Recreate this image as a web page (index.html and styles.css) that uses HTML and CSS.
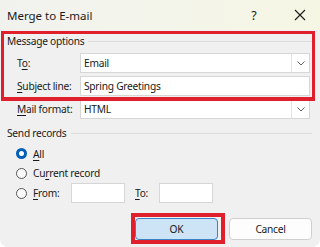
FILE: index.html
```html
<!DOCTYPE html>
<html>
<head>
<meta charset="utf-8">
<link rel="stylesheet" href="styles.css">
</head>
<body>
<div class="win">
  <div class="titlebar">
    <span class="title">Merge to E-mail</span>
    <span class="help">?</span>
    <span class="close">
      <svg width="12" height="12" viewBox="0 0 12 12"><path d="M1 1L11 11M11 1L1 11" stroke="#1a1a1a" stroke-width="1.1" fill="none"/></svg>
    </span>
  </div>
  <div class="body">
    <div class="group-head msg"><span>Message options</span><span class="rule"></span></div>
    <div class="row r-to">
      <span class="lbl">T<u>o</u>:</span>
      <div class="field combo"><span class="val">Email</span><span class="drop"><svg width="8" height="5" viewBox="0 0 8 5"><path d="M0.5 0.5L4 4L7.5 0.5" stroke="#606060" stroke-width="1" fill="none"/></svg></span></div>
    </div>
    <div class="row r-subj">
      <span class="lbl"><u>S</u>ubject line:</span>
      <div class="field"><span class="val">Spring Greetings</span></div>
    </div>
    <div class="row r-fmt">
      <span class="lbl"><u>M</u>ail format:</span>
      <div class="field combo"><span class="val">HTML</span><span class="drop"><svg width="8" height="5" viewBox="0 0 8 5"><path d="M0.5 0.5L4 4L7.5 0.5" stroke="#606060" stroke-width="1" fill="none"/></svg></span></div>
    </div>
    <div class="group-head send"><span>Send records</span><span class="rule"></span></div>
    <div class="radio-row r1"><span class="radio on"></span><span><u>A</u>ll</span></div>
    <div class="radio-row r2"><span class="radio"></span><span>Cu<u>r</u>rent record</span></div>
    <div class="radio-row r3">
      <span class="radio"></span><span class="from-lbl"><u>F</u>rom:</span>
      <div class="small-input"></div>
      <span class="to-lbl"><u>T</u>o:</span>
      <div class="small-input"></div>
    </div>
    <div class="buttons">
      <div class="btn ok">OK</div>
      <div class="btn cancel">Cancel</div>
    </div>
  </div>
  <div class="mark mark-msg"></div>
  <div class="mark mark-ok"></div>
</div>
</body>
</html>
```
FILE: styles.css
```css
* { box-sizing: border-box; }
html, body { margin: 0; padding: 0; }
body {
  width: 320px; height: 247px; overflow: hidden;
  background: #ffffff;
  font-family: "Noto Sans", "Open Sans", sans-serif;
  font-size: 10.2px; letter-spacing: -0.25px; color: #1a1a1a;
}
u { text-decoration: underline; text-underline-offset: 2px; text-decoration-thickness: 1px; }
.win {
  position: relative;
  width: 320px; height: 247px;
  background: #f0f0f0;
  border-radius: 0 0 8px 8px;
  overflow: hidden;
  display: flex; flex-direction: column;
}
.titlebar {
  height: 30px; flex: none;
  display: flex; align-items: center;
  background: linear-gradient(90deg, #f1f2ee 0%, #f4f5e9 60%, #f5f6e3 100%);
  padding-left: 7px;
}
.title { flex: 1; font-size: 11.5px; letter-spacing: 0; }
.help { width: 20px; text-align: center; font-size: 12.5px; margin-right: 26px; letter-spacing: 0; }
.close { width: 20px; display: flex; justify-content: center; margin-right: 10px; }
.body { flex: 1; display: flex; flex-direction: column; }
.group-head { display: flex; align-items: center; height: 14px; line-height: 14px; gap: 4px; margin-left: 7px; margin-right: 8px; }
.group-head .rule { flex: 1; height: 1px; background: #dcdcdc; margin-top: 1px; }
.msg { margin-top: 4px; }
.row { display: flex; align-items: center; height: 20px; margin-right: 10px; }
.lbl { width: 80px; padding-left: 17px; flex: none; white-space: nowrap; }
.r-to { margin-top: 5px; }
.r-subj { margin-top: 3px; }
.r-fmt { margin-top: 3px; }
.field {
  flex: 1; height: 20px;
  background: #fff;
  border: 1px solid #d6d6d6;
  display: flex; align-items: center;
}
.field .val { flex: 1; padding-left: 3px; line-height: 18px; }
.drop {
  width: 18px; height: 18px;
  border-left: 1px solid #e3e3e3;
  display: flex; align-items: center; justify-content: center;
}
.send { margin-top: 7px; }
.radio-row { display: flex; align-items: center; height: 20px; padding-left: 16px; }
.r1 { margin-top: 4px; height: 19px; }
.radio {
  width: 11px; height: 11px; border-radius: 50%;
  border: 1px solid #555;
  background: #fafafa;
  margin-right: 6px; flex: none;
}
.radio.on { border: 3.5px solid #005fb8; background: #fff; }
.from-lbl { width: 38px; }
.small-input { width: 54px; height: 20px; background: #fff; border: 1px solid #d6d6d6; }
.to-lbl { width: 24px; margin-left: 10px; }
.buttons { display: flex; justify-content: flex-end; margin-top: 15px; padding-right: 8px; gap: 11px; }
.btn {
  width: 83px; height: 22px; border-radius: 4px;
  display: flex; align-items: center; justify-content: center;
}
.ok { background: #cde3f6; border: 1px solid #3b83c6; }
.cancel { background: #fdfdfd; border: 1px solid #d0d0d0; }
.mark { position: absolute; border: 3px solid #e01f2d; pointer-events: none; }
.mark-msg { left: 1px; top: 31px; width: 314px; height: 70px; border-width: 3px 3px 4px 3px; }
.mark-ok { left: 131px; top: 213px; width: 94px; height: 31px; border-width: 4px; }
```
